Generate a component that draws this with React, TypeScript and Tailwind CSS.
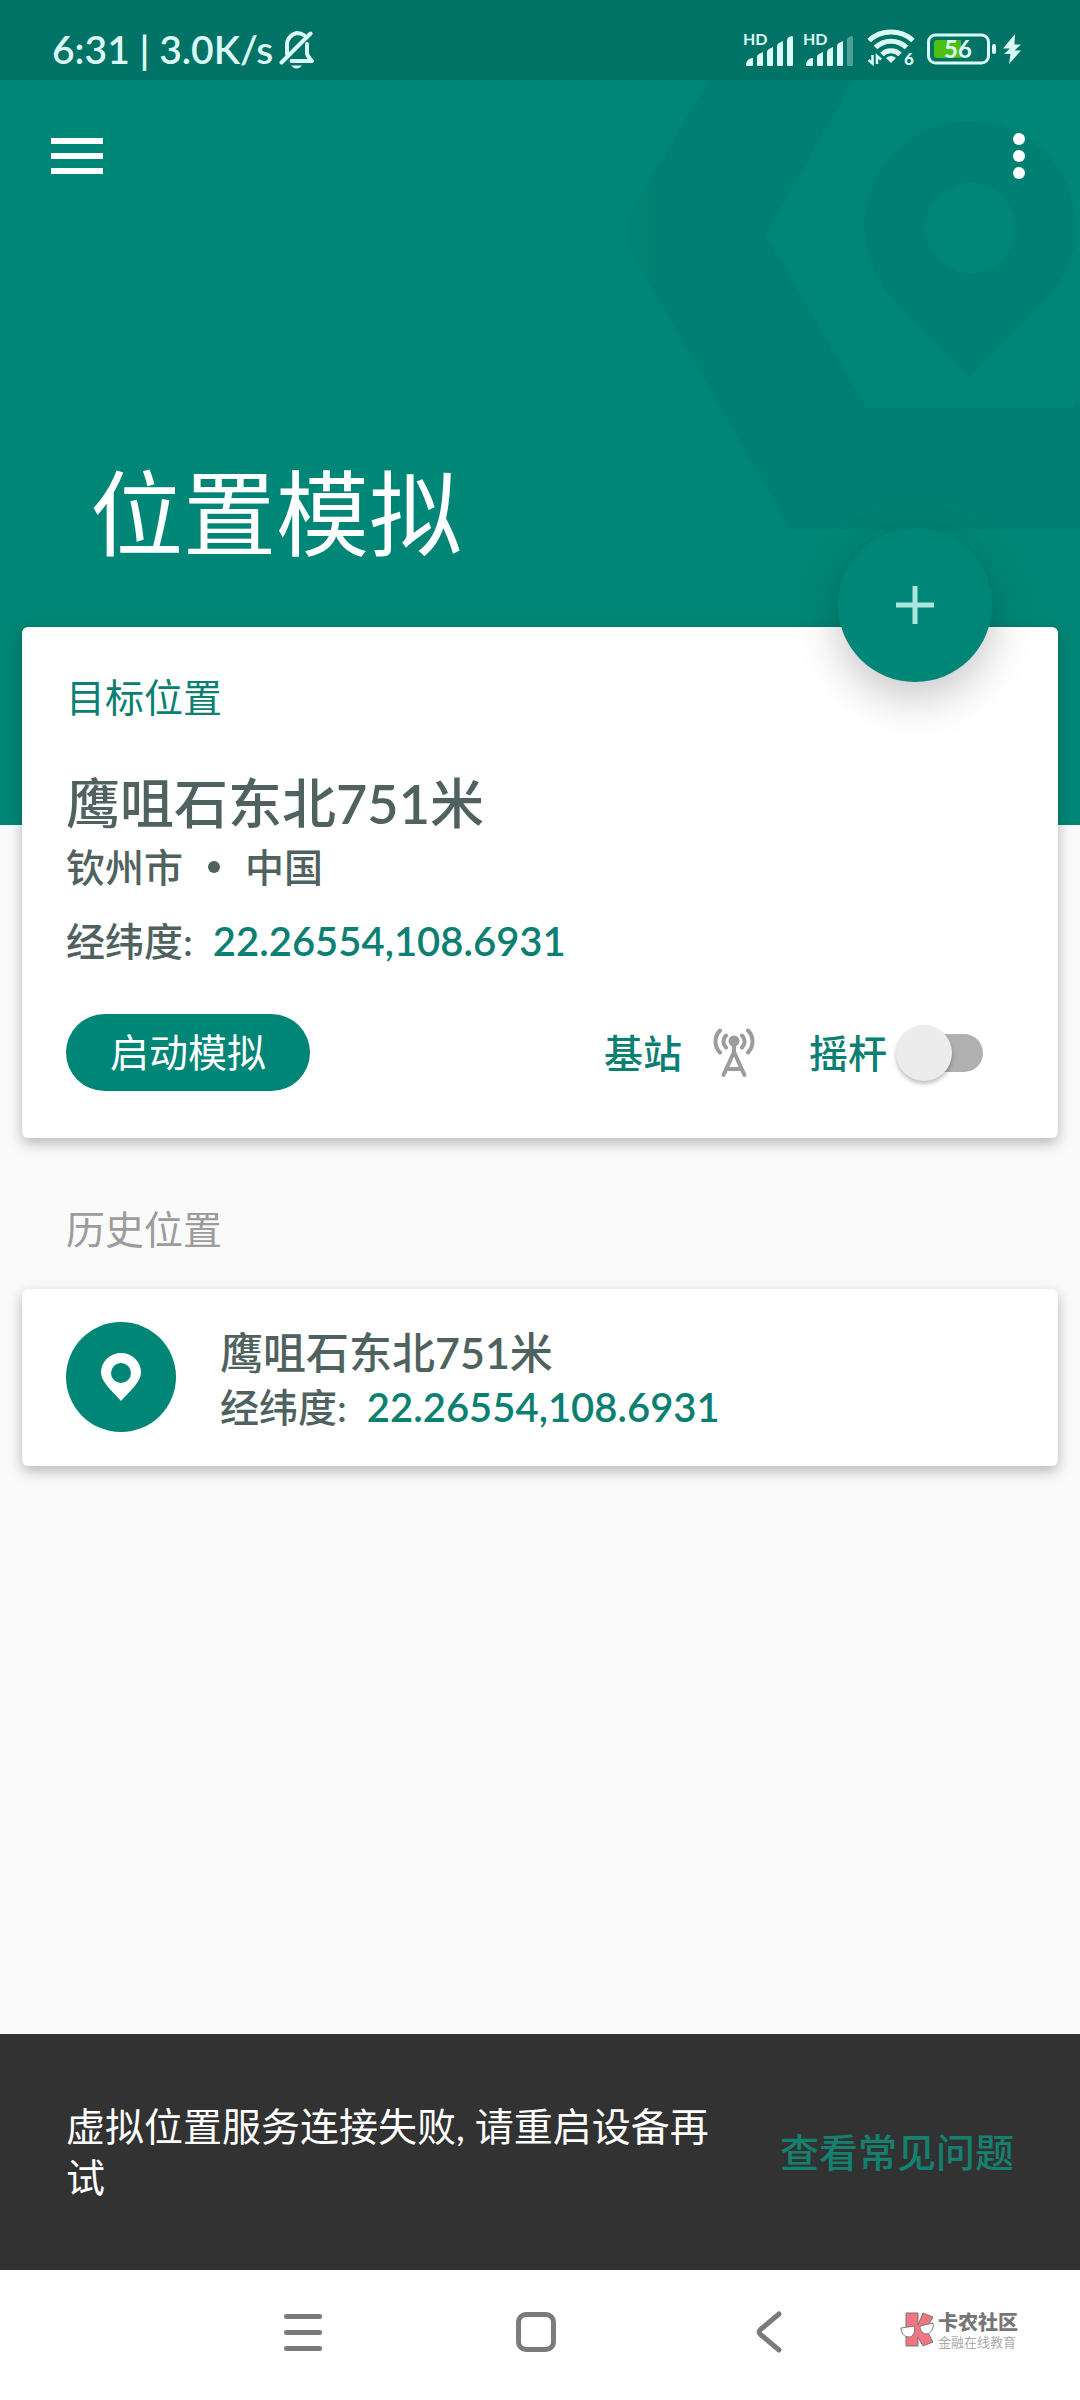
import { useState } from "react";

function BellOffIcon() {
  return (
    <svg width="36" height="40" viewBox="0 0 36 40" fill="none" stroke="currentColor" strokeWidth="4" strokeLinecap="round" strokeLinejoin="round" aria-hidden="true">
      <path d="M2.5 33.5 31.5 4.500" />
      <path d="M8 25V16c0-6 4-11 10-12 3 0 5 .7 7.500 2.500" />
      <path d="M28 15v9c0 3 2.500 5 5 8H12.500" />
      <path d="M12 36.500h11c-1.500 2-3.500 3-5.500 3s-4-1-5.500-3z" fill="currentColor" stroke="none" />
    </svg>
  );
}

function SignalIcon({ weak = false }: { weak?: boolean }) {
  return (
    <svg width="52" height="46" viewBox="0 -6 52 46" fill="currentColor" aria-hidden="true">
      <text x="0" y="13" fontSize="16" fontWeight="700" fontFamily="Lato, sans-serif">HD</text>
      <path d="M3 33c0-4 3-7 7-7v7q0 1-1 1H4q-1 0-1-1z" />
      <path d="M14 25q0-2 2-3l4-2v13q0 1-1 1h-4q-1 0-1-1z" />
      <path d="M24 20q0-2 2-3l4-2v18q0 1-1 1h-4q-1 0-1-1z" />
      <path d="M34 14q0-2 2-3l4-2v24q0 1-1 1h-4q-1 0-1-1z" />
      <path d="M44 8q0-2 2-3l3-1q1 0 1 2v27q0 1-1 1h-4q-1 0-1-1z" opacity={weak ? 0.35 : 1} />
    </svg>
  );
}

function WifiIcon() {
  return (
    <svg width="48" height="46" viewBox="0 -3 48 46" fill="none" stroke="currentColor" aria-hidden="true">
      <path d="M2 11.500c12-11.500 32-11.500 44 0" strokeWidth="5" />
      <path d="M8.500 18.500c8.500-8.500 22.500-8.500 31 0" strokeWidth="5" />
      <path d="M15 25.500c5-5 13-5 18 0" strokeWidth="5" />
      <path d="M24 34l-5-5q5-4 10 0z" fill="currentColor" stroke="none" />
      <path d="M5.500 26v8.500L1.500 31M10 35v-8l4 3.500" strokeWidth="2.500" />
      <text x="37" y="36" fontSize="17" fontWeight="900" fontFamily="Lato, sans-serif" fill="currentColor" stroke="none">6</text>
    </svg>
  );
}

function BatteryIcon() {
  return (
    <svg width="70" height="32" viewBox="0 0 70 32" aria-hidden="true">
      <rect x="1.500" y="2" width="60" height="28" rx="7" fill="none" stroke="currentColor" strokeWidth="3" />
      <path d="M7 10q0-3 3-3h24v18H10q-3 0-3-3z" fill="#4cbf14" />
      <rect x="65" y="11" width="4" height="10" rx="2" fill="currentColor" />
      <text x="31" y="24.500" textAnchor="middle" fontSize="24" fontWeight="700" fontFamily="Lato, sans-serif" fill="currentColor">56</text>
    </svg>
  );
}

function StatusBar() {
  return (
    <div className="flex h-20 items-center justify-between bg-[#007366] pt-[18px] pr-[57px] pl-[52px] text-[#dcfaf5]">
      <div className="flex items-center gap-1.5">
        <span className="text-[39px] leading-12 font-semibold">6:31 | 3.0K/s</span>
        <BellOffIcon />
      </div>
      <div className="flex items-center">
        <span className="flex gap-2">
          <SignalIcon />
          <SignalIcon weak />
        </span>
        <span className="flex px-3">
          <WifiIcon />
        </span>
        <BatteryIcon />
        <svg className="ml-1" width="22" height="32" viewBox="0 0 22 32" fill="currentColor" aria-hidden="true">
          <path d="M14 1 2 15.500h7L3 21h6.500L8 31 20 17.500h-6.500L20 11.500h-6.500z" />
        </svg>
      </div>
    </div>
  );
}

function BackdropLogo() {
  return (
    <svg className="absolute top-20 right-0" width="480" height="450" viewBox="600 80 480 450" aria-hidden="true">
      <defs>
        <linearGradient id="backdrop-edge" gradientUnits="userSpaceOnUse" x1="622" y1="0" x2="660" y2="0">
          <stop offset="0" stopColor="#008072" stopOpacity="0.2" />
          <stop offset="1" stopColor="#008072" />
        </linearGradient>
      </defs>
      <path d="M708 80 631 213q-9 19 0 38L790 529h290V395l-8 13H867L766 235 853 80z" fill="url(#backdrop-edge)" />
      <path fillRule="evenodd" fill="#008072" d="M970 377 889 295A106 106 0 1 1 1051 295ZM970 183a45 45 0 1 0 0 90a45 45 0 1 0 0-90z" />
    </svg>
  );
}

function TowerIcon() {
  return (
    <svg width="42" height="50" viewBox="0 0 42 50" fill="none" stroke="#9c9c9c" strokeWidth="4" strokeLinecap="round" strokeLinejoin="round" aria-hidden="true">
      <circle cx="21" cy="13" r="5.500" fill="#9c9c9c" stroke="none" />
      <path d="M21 14v10M21 24 10.500 47M21 24l10.500 23M15 41h12" />
      <path d="M7 2.500c-6 6-6 16 0 22M35 2.500c6 6 6 16 0 22M13 7.500c-3.500 3.500-3.500 8.500 0 12M29 7.500c3.500 3.500 3.500 8.500 0 12" />
    </svg>
  );
}

function Coordinates() {
  return (
    <p className="text-[39px] leading-12 font-medium">
      经纬度:<span className="ml-5 text-[40px] font-semibold text-[#0b8072]">22.26554,108.6931</span>
    </p>
  );
}

function CommunityMark() {
  return (
    <div className="absolute top-10 right-[62px] flex items-center gap-1">
      <svg width="34" height="38" viewBox="0 0 34 38" stroke="#777" strokeWidth="1" aria-hidden="true">
        <path d="M6 2h12v12l5-12 10 4-7 12 7 13-10 4-5-9v9H6z" fill="#f27680" />
        <path d="M1 17l13-2c2 6-1 11-5 11-5 0-8-4-8-9zM20 15l13-3c1 6-2 10-6 11-4 0-7-3-7-8z" fill="#fff" />
      </svg>
      <div className="whitespace-nowrap">
        <p className="text-[20px] leading-6 font-black text-[#777]">卡农社区</p>
        <p className="text-[13px] leading-4 text-[#aaa]">金融在线教育</p>
      </div>
    </div>
  );
}

export default function App() {
  const [joystick, setJoystick] = useState(false);

  return (
    <div className="flex min-h-screen flex-col bg-[#fafafa] font-[Lato,'Noto_Sans_CJK_SC',sans-serif] text-[#4f625f]" lang="zh-CN">
      <header className="relative bg-[#008676] pb-[254px] text-white">
        <StatusBar />
        <BackdropLogo />
        <div className="relative flex h-38 items-center justify-between px-[51px]">
          <button type="button" aria-label="菜单" className="flex flex-col gap-[9px]">
            <span className="h-1.5 w-13 bg-white" />
            <span className="h-1.5 w-13 bg-white" />
            <span className="h-1.5 w-13 bg-white" />
          </button>
          <button type="button" aria-label="更多" className="flex w-5 flex-col items-center gap-[5px]">
            <span className="size-3 rounded-full bg-white" />
            <span className="size-3 rounded-full bg-white" />
            <span className="size-3 rounded-full bg-white" />
          </button>
        </div>
        <h1 className="relative mt-[225px] mb-0.5 pl-[90px] text-[93px] leading-28 font-normal">位置模拟</h1>
      </header>

      <main className="flex-1 px-[22px]">
        <section className="relative -mt-[198px] rounded-md bg-white px-11 pt-[46px] pb-[47px] shadow-[0_5px_14px_rgba(0,0,0,0.28)]">
          <button type="button" aria-label="添加位置" className="absolute -top-[99px] right-[66px] flex size-[154px] items-center justify-center rounded-full bg-[#008676] shadow-[0_16px_44px_rgba(0,0,0,0.22)]">
            <svg width="38" height="38" viewBox="0 0 38 38" stroke="#a9e6de" strokeWidth="5" aria-hidden="true">
              <path d="M19 0v38M0 19h38" />
            </svg>
          </button>
          <h2 className="text-[39px] leading-12 text-[#0b8072]">目标位置</h2>
          <p className="mt-[51px] text-[54px] leading-16 font-medium">鹰咀石东北<span className="font-semibold">751</span>米</p>
          <p className="mt-[7px] flex items-center text-[39px] leading-12 font-medium">
            钦州市
            <span className="mx-[25px] size-3 rounded-full bg-[#4f625f]" />
            中国
          </p>
          <div className="mt-[26px]">
            <Coordinates />
          </div>
          <div className="mt-[49px] flex items-center justify-between">
            <button type="button" className="rounded-full bg-[#008676] px-11 pt-[14px] pb-[15px] text-[39px] leading-12 text-white">启动模拟</button>
            <div className="mr-[31px] flex items-center text-[39px] leading-12 font-medium text-[#0b8072]">
              <button type="button" className="flex items-center gap-[31px]">
                基站
                <TowerIcon />
              </button>
              <label htmlFor="joystick" className="ml-[54px]">摇杆</label>
              <input
                id="joystick"
                type="checkbox"
                role="switch"
                checked={joystick}
                onChange={(e) => setJoystick(e.target.checked)}
                className="relative ml-2.5 h-[38px] w-[86px] appearance-none rounded-full bg-[#b0b0b0] before:absolute before:-top-[9px] before:-left-px before:size-14 before:rounded-full before:bg-[#ececec] before:shadow-[0_3px_4px_rgba(0,0,0,0.25)] checked:bg-[#80c3bb] checked:before:left-8 checked:before:bg-[#008676]"
              />
            </div>
          </div>
        </section>

        <h2 className="mt-[67px] pl-11 text-[39px] leading-12 text-[#9c9c9c]">历史位置</h2>
        <section className="mt-9 flex items-center gap-11 rounded-md bg-white px-11 pt-[33px] pb-[34px] shadow-[0_5px_14px_rgba(0,0,0,0.28)]">
          <span className="flex size-[110px] items-center justify-center rounded-full bg-[#008676]">
            <svg width="40" height="48" viewBox="0 0 40 48" fill="#fff" aria-hidden="true">
              <path fillRule="evenodd" d="M20 48C12 39 0 29 0 19.500a20 19.500 0 0 1 40 0C40 29 28 39 20 48zM20 10a10 10 0 1 0 0 20a10 10 0 1 0 0-20z" />
            </svg>
          </span>
          <div>
            <p className="text-[43px] leading-[60px] font-medium">鹰咀石东北<span className="font-semibold">751</span>米</p>
            <Coordinates />
          </div>
        </section>
      </main>

      <div role="alert" className="flex items-center justify-between bg-[#323232] px-[66px] py-[67px] text-[39px]">
        <p className="w-[656px] leading-[51px] text-white">虚拟位置服务连接失败, 请重启设备再试</p>
        <a href="#faq" className="leading-12 font-medium whitespace-nowrap text-[#14806f]">查看常见问题</a>
      </div>

      <nav className="relative flex h-[130px] items-center justify-center gap-[177px] bg-white pr-[9px] pb-1.5">
        <button type="button" aria-label="最近任务" className="flex w-14 flex-col items-center gap-[11px]">
          <span className="h-[5px] w-[38px] rounded-full bg-[#7b7b7b]" />
          <span className="h-[5px] w-[38px] rounded-full bg-[#7b7b7b]" />
          <span className="h-[5px] w-[38px] rounded-full bg-[#7b7b7b]" />
        </button>
        <button type="button" aria-label="主屏幕" className="flex w-14 justify-center">
          <span className="size-10 rounded-[10px] border-5 border-[#7b7b7b]" />
        </button>
        <button type="button" aria-label="返回" className="flex w-14 justify-center">
          <svg width="26" height="42" viewBox="0 0 26 42" fill="none" stroke="#7b7b7b" strokeWidth="5" strokeLinecap="round" strokeLinejoin="round" aria-hidden="true">
            <path d="M23 3 4.500 18.500q-2.500 2.500 0 5L23 39" />
          </svg>
        </button>
        <CommunityMark />
      </nav>
    </div>
  );
}
